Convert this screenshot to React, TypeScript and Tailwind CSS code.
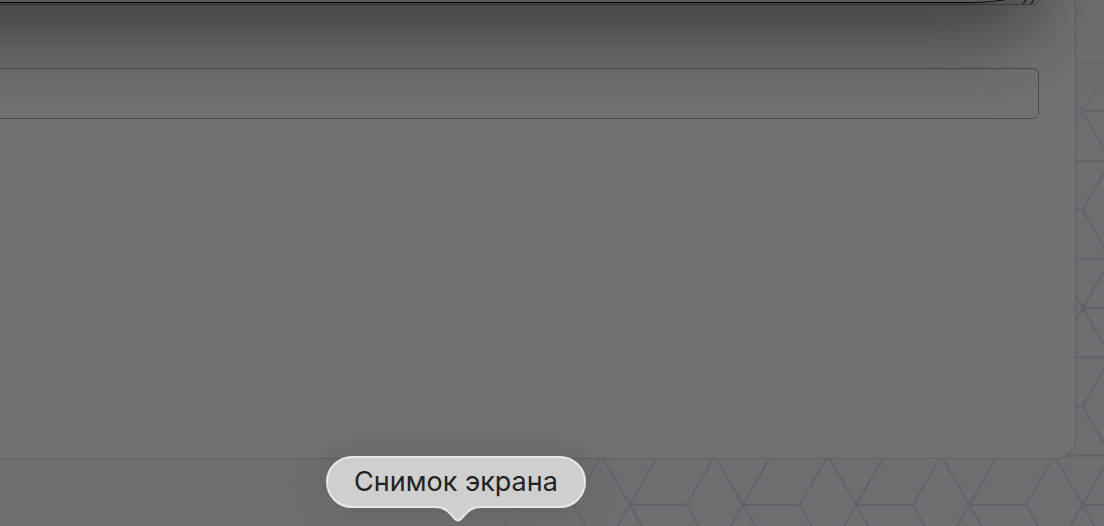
function CubePattern() {
  return (
    <svg className="absolute inset-0 size-full" aria-hidden="true">
      <defs>
        <pattern id="cubes" x="1026" y="111.5" width="113.2" height="196.6" patternUnits="userSpaceOnUse">
          <g fill="none" stroke="#5f6069" strokeWidth="1.8">
            {/* horizontal edges */}
            <path d="M56.6 0H113.2M56.6 196.6H113.2M28.3 49.15H84.9M0 98.3H56.6M28.3 147.45H84.9" />
            {/* slanted edges */}
            <path d="M0 0L28.3 49.15L56.6 0L84.9 49.15L56.6 98.3L84.9 147.45L56.6 196.6L28.3 147.45L0 196.6" />
            <path d="M28.3 49.15L0 98.3L28.3 147.45M84.9 49.15L113.2 98.3L84.9 147.45" />
          </g>
        </pattern>
      </defs>
      <rect width="100%" height="100%" fill="url(#cubes)" />
    </svg>
  )
}

function WindowEdge() {
  return (
    <div className="pointer-events-none absolute -top-[297px] right-16 -left-40 h-[300px] rounded-br-[64px_28px] border-b border-black bg-[#555a5d] shadow-[0_32px_80px_rgba(0,0,0,0.45)]" />
  )
}

function Tooltip({ label }: { label: string }) {
  return (
    <div
      role="tooltip"
      className="absolute bottom-[18px] left-[326px] flex h-[52px] w-[260px] items-center justify-center rounded-full border-2 border-[#e8e8e8] bg-[#cfcfcf] shadow-[0_0_40px_rgba(0,0,0,0.12)]"
    >
      <span className="text-[27px] leading-8 whitespace-nowrap text-[#222222]">{label}</span>
      <svg className="absolute top-[47px] left-[107px]" width="46" height="17" viewBox="0 0 46 17" aria-hidden="true">
        <path d="M0 0V2C12 2 15 9 20 14Q23 17 26 14C31 9 34 2 46 2V0Z" fill="#cfcfcf" />
        <path d="M0 2C12 2 15 9 20 14Q23 17 26 14C31 9 34 2 46 2" fill="none" stroke="#e8e8e8" strokeWidth="2" />
      </svg>
    </div>
  )
}

export default function App() {
  return (
    <div className="relative min-h-screen overflow-hidden bg-[#6d6e70] font-['Inter','Liberation_Sans',sans-serif]">
      {/* the pattern fades out towards the top and the left */}
      <div className="absolute inset-0 mask-l-from-45% mask-l-to-56%">
        <div className="absolute inset-0 mask-t-from-70% mask-t-to-100%">
          <CubePattern />
        </div>
      </div>

      <main className="relative mr-7 mb-[67px] min-h-[459px] rounded-br-[20px] border-r border-b border-[#5f6065] bg-[#717171] pr-9">
        <div className="relative">
          <textarea
            aria-label="Message"
            className="block h-[5px] w-full resize-none rounded-br-md border-r border-b border-[#4b4b52]"
          />
          <svg className="absolute right-0 bottom-px" width="18" height="4" viewBox="0 0 18 4" aria-hidden="true">
            <path d="M2 4L5 0M10 4L13 0" stroke="#2e2e2e" strokeWidth="1.5" />
          </svg>
        </div>
        <input
          type="text"
          aria-label="Details"
          className="mt-[63px] block h-[51px] w-full rounded-r-md border border-l-0 border-[#4c4b54] px-4 outline-none"
        />
      </main>

      <WindowEdge />
      <Tooltip label="Снимок экрана" />
    </div>
  )
}
